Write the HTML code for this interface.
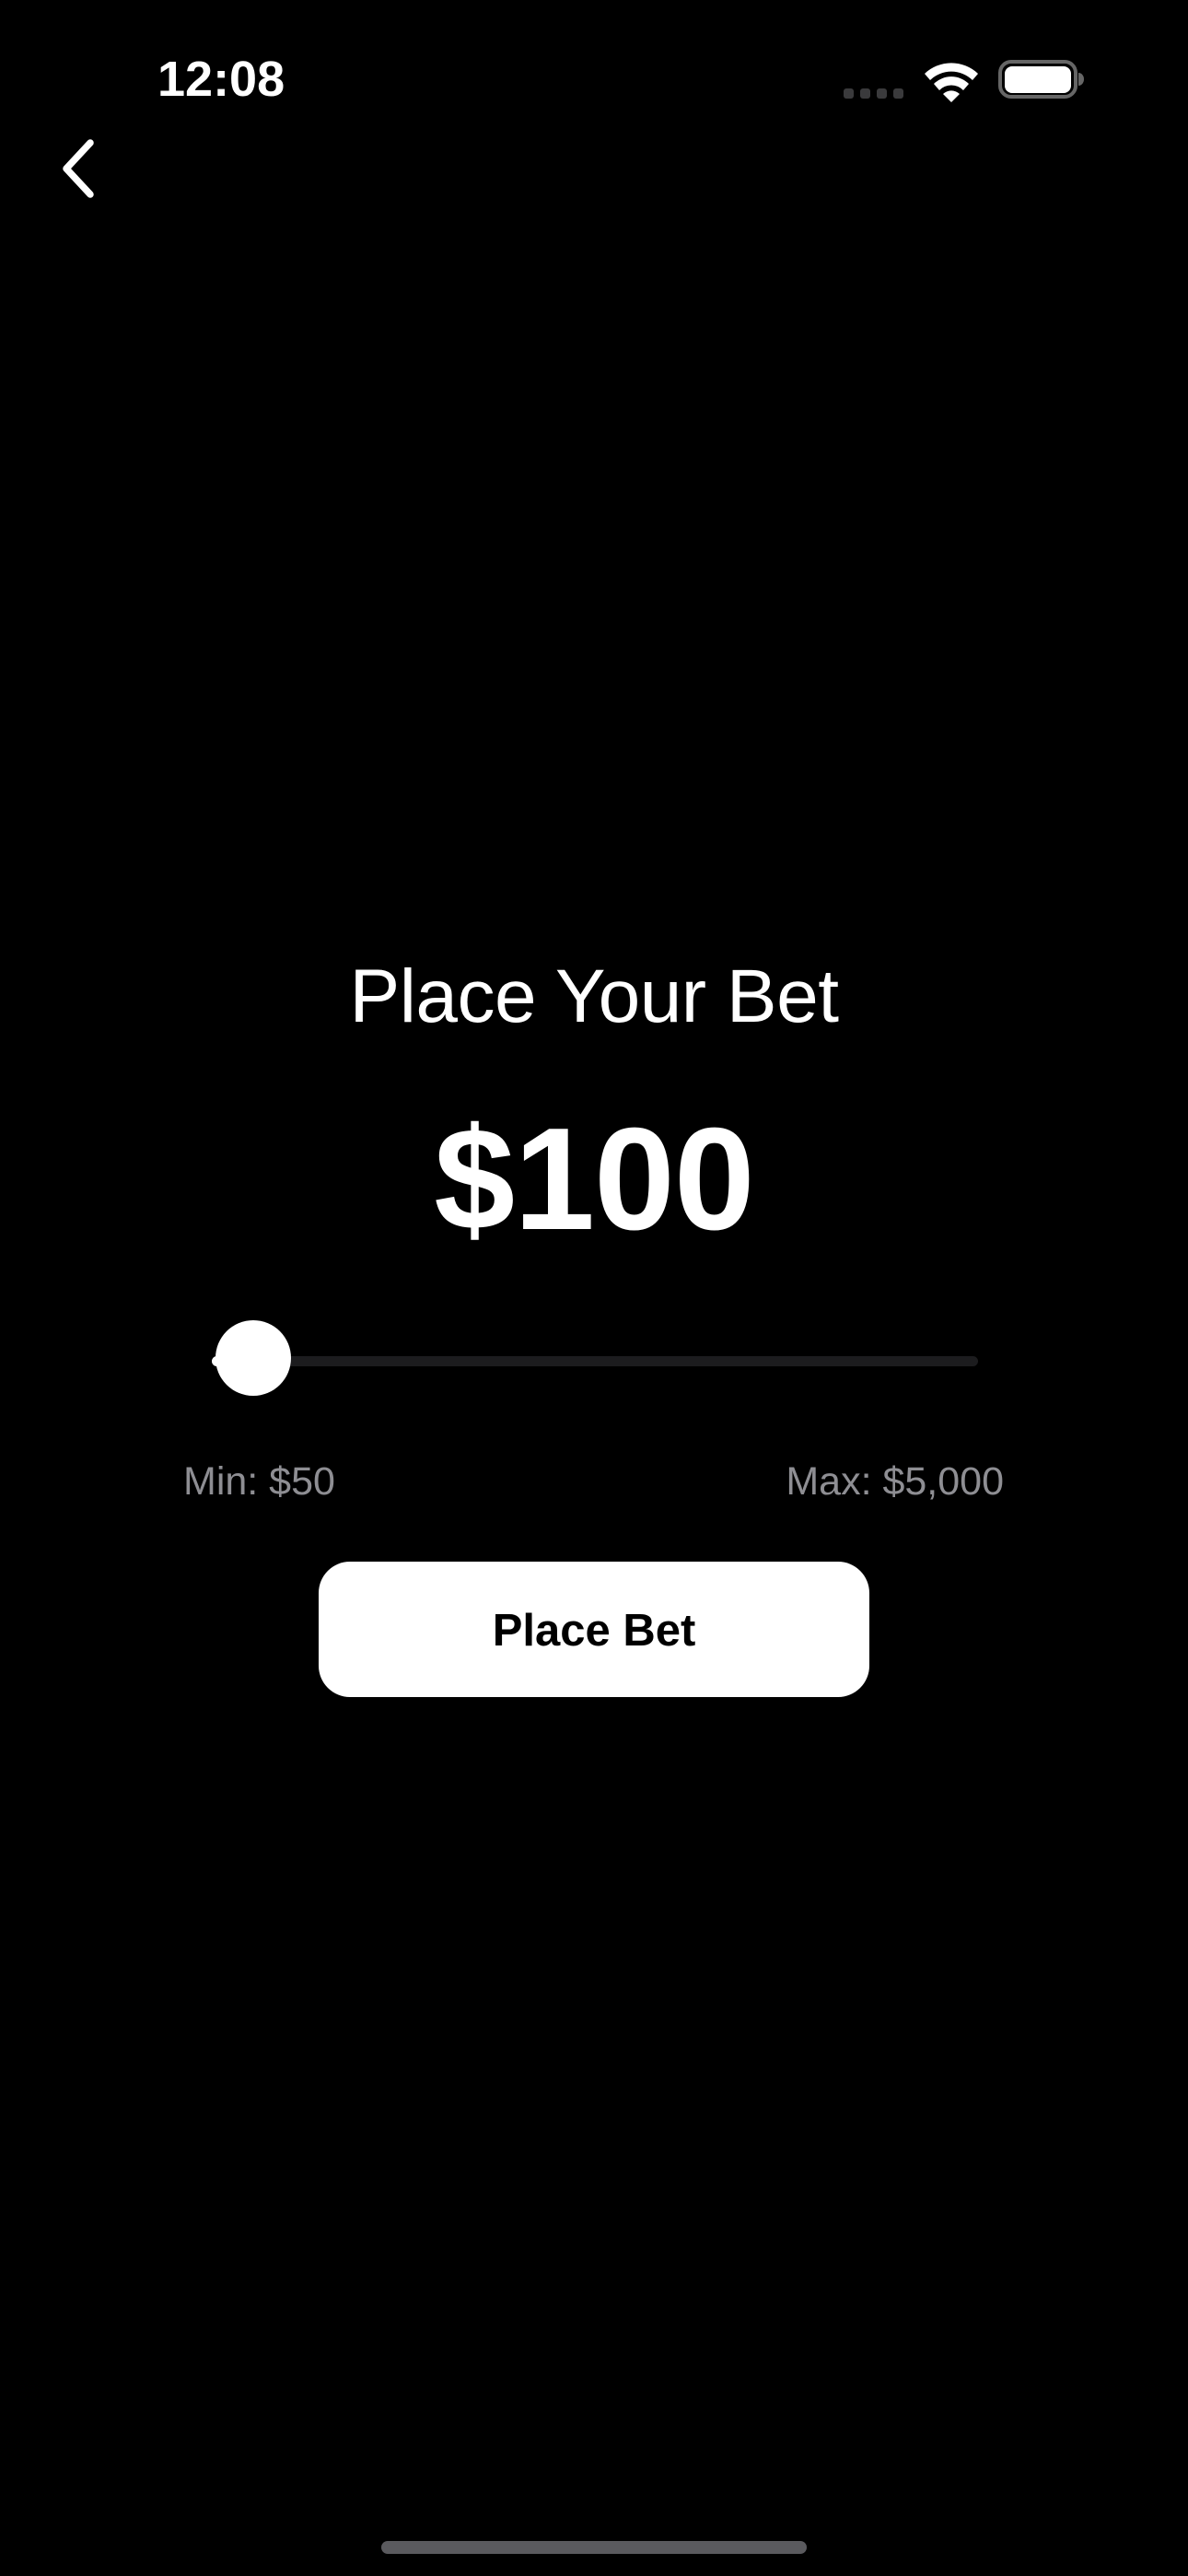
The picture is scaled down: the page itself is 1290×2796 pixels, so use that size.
<!DOCTYPE html>
<html><head><meta charset="utf-8"><style>
html,body{margin:0;padding:0;background:#000;}
body{width:1290px;height:2796px;position:relative;overflow:hidden;font-family:"Liberation Sans",sans-serif;color:#fff;}
.abs{position:absolute;}
</style></head><body>
<div class="abs" style="left:171px;top:56px;font-size:54px;font-weight:bold;line-height:60px;letter-spacing:0px;">12:08</div>
<svg class="abs" style="left:0;top:0" width="1290" height="240">
  <g fill="#3a3a3c">
    <rect x="916" y="96" width="11" height="11" rx="3"/>
    <rect x="934" y="96" width="11" height="11" rx="3"/>
    <rect x="952" y="96" width="11" height="11" rx="3"/>
    <rect x="970" y="96" width="11" height="11" rx="3"/>
  </g>
  <g fill="#fff">
    <path d="M1004 80 A42 42 0 0 1 1062 80 L1056 87 A33 33 0 0 0 1010 87 Z"/>
    <path d="M1014 91 A27 27 0 0 1 1052 91 L1046 98 A18 18 0 0 0 1020 98 Z"/>
    <path d="M1024 102 A13 13 0 0 1 1042 102 L1033 111 Z"/>
  </g>
  <rect x="1086" y="67" width="82" height="38" rx="12" fill="none" stroke="#666" stroke-width="4"/>
  <rect x="1091" y="72" width="72" height="29" rx="8" fill="#fff"/>
  <path d="M1171 79 a6 7 0 0 1 0 14 Z" fill="#666"/>
  <path d="M98 155 L72 183 L98 211" fill="none" stroke="#fff" stroke-width="7.5" stroke-linecap="round" stroke-linejoin="round"/>
</svg>
<div class="abs" style="left:0;width:1290px;top:1032px;text-align:center;font-size:82px;line-height:100px;letter-spacing:-0.5px;">Place Your Bet</div>
<div class="abs" style="left:0;width:1290px;top:1190px;text-align:center;font-size:158px;font-weight:bold;line-height:180px;letter-spacing:-1px;">$100</div>
<div class="abs" style="left:230px;top:1472px;width:832px;height:11px;border-radius:6px;background:#1c1c1e;"></div>
<div class="abs" style="left:230px;top:1472px;width:45px;height:11px;border-radius:6px;background:#fff;"></div>
<div class="abs" style="left:234px;top:1433px;width:82px;height:82px;border-radius:50%;background:#fff;"></div>
<div class="abs" style="left:199px;top:1583px;font-size:43px;line-height:50px;color:#8e8e93;">Min: $50</div>
<div class="abs" style="right:200px;top:1583px;font-size:43px;line-height:50px;color:#8e8e93;">Max: $5,000</div>
<div class="abs" style="left:346px;top:1695px;width:598px;height:147px;border-radius:34px;background:#fff;color:#000;text-align:center;line-height:150px;font-size:49px;font-weight:bold;">Place Bet</div>
<div class="abs" style="left:414px;top:2758px;width:462px;height:14px;border-radius:7px;background:#5a5a5e;"></div>
</body></html>
